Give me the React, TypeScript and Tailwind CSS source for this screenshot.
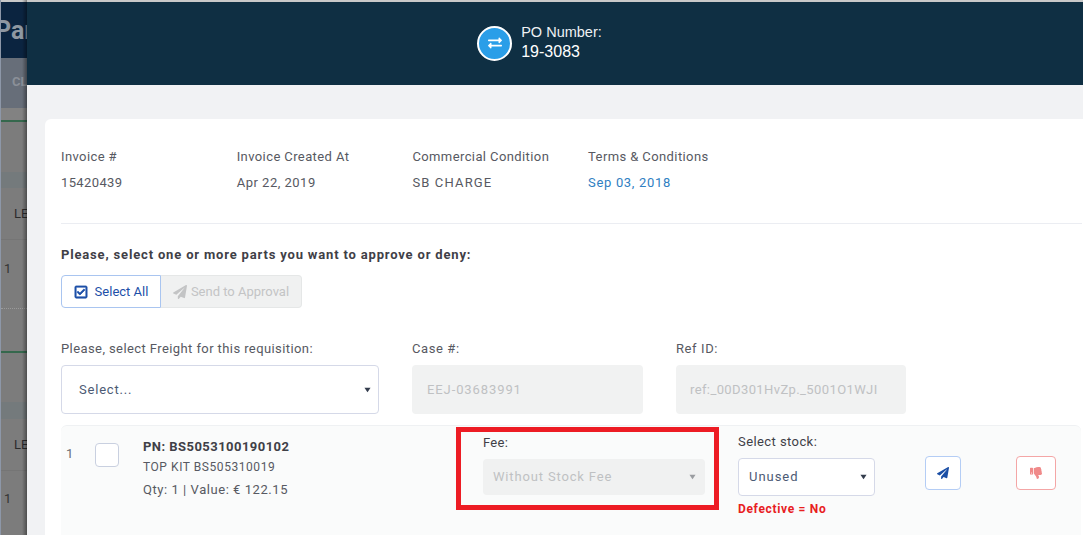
import { FaExchangeAlt, FaRegCheckSquare, FaPaperPlane, FaThumbsDown } from "react-icons/fa";

const roboto = "font-['Roboto',sans-serif]";

function Caret({ className }: { className: string }) {
  return (
    <svg viewBox="0 0 8 6" className={`w-[7px] h-[6px] ${className}`}>
      <path d="M0.5 0.5H7.5L4 5.5Z" fill="currentColor" />
    </svg>
  );
}

function Field({ label, value, valueClass }: { label: string; value: string; valueClass: string }) {
  return (
    <div className="w-[175.7px] shrink-0">
      <div className="h-[18px] leading-[18px] text-[#575962] tracking-[0.4px]">{label}</div>
      <div className={`mt-[8px] h-[18px] leading-[18px] ${valueClass}`}>{value}</div>
    </div>
  );
}

function Backdrop() {
  return (
    <div className="w-[27px] shrink-0 h-full overflow-hidden bg-[#7c7c7c] border-l border-[#8d97a8] flex flex-col relative">
      <div className="h-[2px] shrink-0 bg-[#c9c9c9]" />
      <div className="h-[56px] shrink-0 bg-[#0b2440] text-[#8e97a1] text-[25px] leading-[58px] font-bold font-['Roboto',sans-serif] whitespace-nowrap -ml-[6px]">
        Par
      </div>
      <div className="h-[50px] shrink-0 bg-[#676e79] text-[#8b9098] text-[13px] font-bold leading-[48px] pl-[11px] whitespace-nowrap font-['Roboto',sans-serif]">CL</div>
      <div className="h-[12px] shrink-0 bg-[#828282]" />
      <div className="h-[2px] shrink-0 bg-[#35684d]" />
      <div className="h-[50px] shrink-0" />
      <div className="h-[16px] shrink-0 bg-[#747a7c]" />
      <div className="h-[52px] shrink-0 text-[#2b2b2b] text-[13px] leading-[52px] pl-[13px] border-b border-[#757575] whitespace-nowrap font-['Roboto',sans-serif]">LE</div>
      <div className="h-[69px] shrink-0 text-[#333] text-[13px] leading-[58px] pl-[3px] border-b border-dotted border-[#9a9a9a] font-['Roboto',sans-serif]">1</div>
      <div className="h-[42px] shrink-0" />
      <div className="h-[2px] shrink-0 bg-[#35684d]" />
      <div className="h-[49px] shrink-0" />
      <div className="h-[17px] shrink-0 bg-[#747a7c]" />
      <div className="h-[52px] shrink-0 text-[#2b2b2b] text-[13px] leading-[52px] pl-[13px] border-b border-[#757575] whitespace-nowrap font-['Roboto',sans-serif]">LE</div>
      <div className="h-[60px] shrink-0 text-[#333] text-[13px] leading-[56px] pl-[3px] font-['Roboto',sans-serif]">1</div>
      <div className="absolute inset-y-0 right-0 w-[5px] bg-gradient-to-r from-transparent to-[#00000060]" />
    </div>
  );
}

export default function App() {
  return (
    <div className={`w-[1083px] h-[535px] overflow-hidden flex text-[13px] ${roboto}`}>
      <Backdrop />
      <div className="flex-1 min-w-0 h-full bg-[#f1f2f4] flex flex-col">
        <div className="h-[2px] shrink-0 bg-[#c9c9c9]" />
        <header className="h-[83px] shrink-0 bg-[#0f2f43] flex items-center justify-center pr-[31px] font-['Liberation_Sans',sans-serif]">
          <div className="w-[35px] h-[35px] rounded-full bg-[#2a9ee8] border-2 border-white flex items-center justify-center text-white -mt-[1px]">
            <FaExchangeAlt className="w-[14px] h-[14px]" />
          </div>
          <div className="ml-[9px] -mt-[3px] text-[#eef1f3]">
            <div className="h-[20px] leading-[20px] text-[14.5px]">PO Number:</div>
            <div className="h-[20px] leading-[20px] text-[16px] text-white">19-3083</div>
          </div>
        </header>

        <main className="mt-[34px] ml-[18px] flex-1 bg-white rounded-l-[6px] pl-[16px] pt-[28px]">
          <div className="flex pt-[1px]">
            <Field label="Invoice #" value="15420439" valueClass="text-[#575962] tracking-[0.38px]" />
            <Field label="Invoice Created At" value="Apr 22, 2019" valueClass="text-[#575962] tracking-[0.5px]" />
            <Field label="Commercial Condition" value="SB CHARGE" valueClass="text-[#575962] tracking-[1.15px]" />
            <Field label="Terms & Conditions" value="Sep 03, 2018" valueClass="text-[#2f80c2] tracking-[0.67px]" />
          </div>
          <div className="mt-[31px] mr-[1px] border-t border-[#ebedf2]" />

          <div className="mt-[22px] h-[18px] leading-[18px] font-bold text-[#3f4047] tracking-[0.83px]">
            Please, select one or more parts you want to approve or deny:
          </div>

          <div className="mt-[11px] flex h-[33px] w-[241px]">
            <div className="w-[100px] h-full bg-white border border-[#a9c5f0] rounded-l-[4px] text-[#1d4fa8] flex items-center justify-center gap-[7px] text-[13px]">
              <FaRegCheckSquare className="w-[14px] h-[14px] stroke-current stroke-[24]" />
              <span>Select All</span>
            </div>
            <div className="flex-1 h-full bg-[#f0f1f1] border border-[#e5e7e7] border-l-0 rounded-r-[4px] text-[#c3c4c5] flex items-center justify-center gap-[4px] text-[13px]">
              <FaPaperPlane className="w-[14px] h-[14px]" />
              <span>Send to Approval</span>
            </div>
          </div>

          <div className="mt-[32px] flex items-start">
            <div className="w-[318px]">
              <div className="h-[18px] leading-[18px] text-[#575962] tracking-[0.41px]">Please, select Freight for this requisition:</div>
              <div className="mt-[7px] h-[49px] bg-white border border-[#d5d9e8] rounded-[4px] pl-[17px] pr-[7px] flex items-center justify-between text-[#4c5a74] tracking-[0.8px]">
                <span>Select...</span>
                <Caret className="text-[#333c4d]" />
              </div>
            </div>
            <div className="ml-[33px] w-[231px]">
              <div className="h-[18px] leading-[18px] text-[#575962] tracking-[0.6px]">Case #:</div>
              <div className="mt-[7px] h-[49px] bg-[#f1f2f2] rounded-[4px] pl-[15px] flex items-center text-[#bfc1c3] tracking-[0.9px]">EEJ-03683991</div>
            </div>
            <div className="ml-[33px] w-[230px]">
              <div className="h-[18px] leading-[18px] text-[#575962] tracking-[0.6px]">Ref ID:</div>
              <div className="mt-[7px] h-[49px] bg-[#f1f2f2] rounded-[4px] pl-[14px] flex items-center text-[#bfc1c3] tracking-[0.39px] whitespace-nowrap">ref:_00D301HvZp._5001O1WJI</div>
            </div>
          </div>

          <section className="relative mt-[11px] w-[1020px] h-[120px] bg-[#fafbfb] border-t border-[#eff1f3] rounded-t-[6px] flex items-start">
            <div className="ml-[5px] mt-[19px] w-[29px] h-[18px] leading-[18px] text-[#6b6d75]">1</div>
            <div className="mt-[17px] w-[24px] h-[24px] bg-white border border-[#c9d0e0] rounded-[4px] shrink-0" />
            <div className="ml-[24px] w-[340px] mt-[12px] text-[#575962]">
              <div className="h-[18px] leading-[18px] font-bold text-[#3f4047] tracking-[0.46px]">PN: BS5053100190102</div>
              <div className="mt-[2px] h-[18px] leading-[18px] text-[12px] tracking-[0.56px]">TOP KIT BS505310019</div>
              <div className="mt-[5px] h-[18px] leading-[18px] tracking-[0.55px]">Qty: 1 | Value: € 122.15</div>
            </div>
            <div className="w-[222px] mt-[9px]">
              <div className="h-[16px] leading-[16px] text-[#3f4047] tracking-[0.3px]">Fee:</div>
              <div className="mt-[8px] h-[36px] bg-[#f0f1f1] rounded-[4px] pl-[10px] pr-[9px] flex items-center justify-between text-[#bfc1c3] tracking-[0.84px]">
                <span>Without Stock Fee</span>
                <Caret className="text-[#9a9da1]" />
              </div>
            </div>
            <div className="ml-[33px] w-[137px] mt-[8px]">
              <div className="h-[16px] leading-[16px] text-[#3f4047] tracking-[0.42px]">Select stock:</div>
              <div className="mt-[8px] h-[38px] bg-white border border-[#d5d9e8] rounded-[4px] pl-[10px] pr-[7px] flex items-center justify-between text-[#4c5a74] tracking-[0.95px]">
                <span>Unused</span>
                <Caret className="text-[#333c4d]" />
              </div>
              <div className="mt-[5px] h-[16px] leading-[16px] text-[12px] font-bold text-[#e8201f] tracking-[0.67px]">Defective = No</div>
            </div>
            <div className="ml-[50px] mt-[30px] w-[36px] h-[34px] bg-white border border-[#b4cdf5] rounded-[4px] flex items-center justify-center text-[#1a4ea5]">
              <FaPaperPlane className="w-[12px] h-[12px]" />
            </div>
            <div className="ml-[55px] mt-[30px] w-[40px] h-[34px] bg-white border border-[#f4a6a6] rounded-[4px] flex items-center justify-center text-[#f08a8a]">
              <FaThumbsDown className="w-[12px] h-[12px]" />
            </div>
            <div className="absolute left-[395px] top-[1px] w-[263px] h-[83px] border-[5px] border-[#ed1c24]" />
          </section>
        </main>
      </div>
    </div>
  );
}
